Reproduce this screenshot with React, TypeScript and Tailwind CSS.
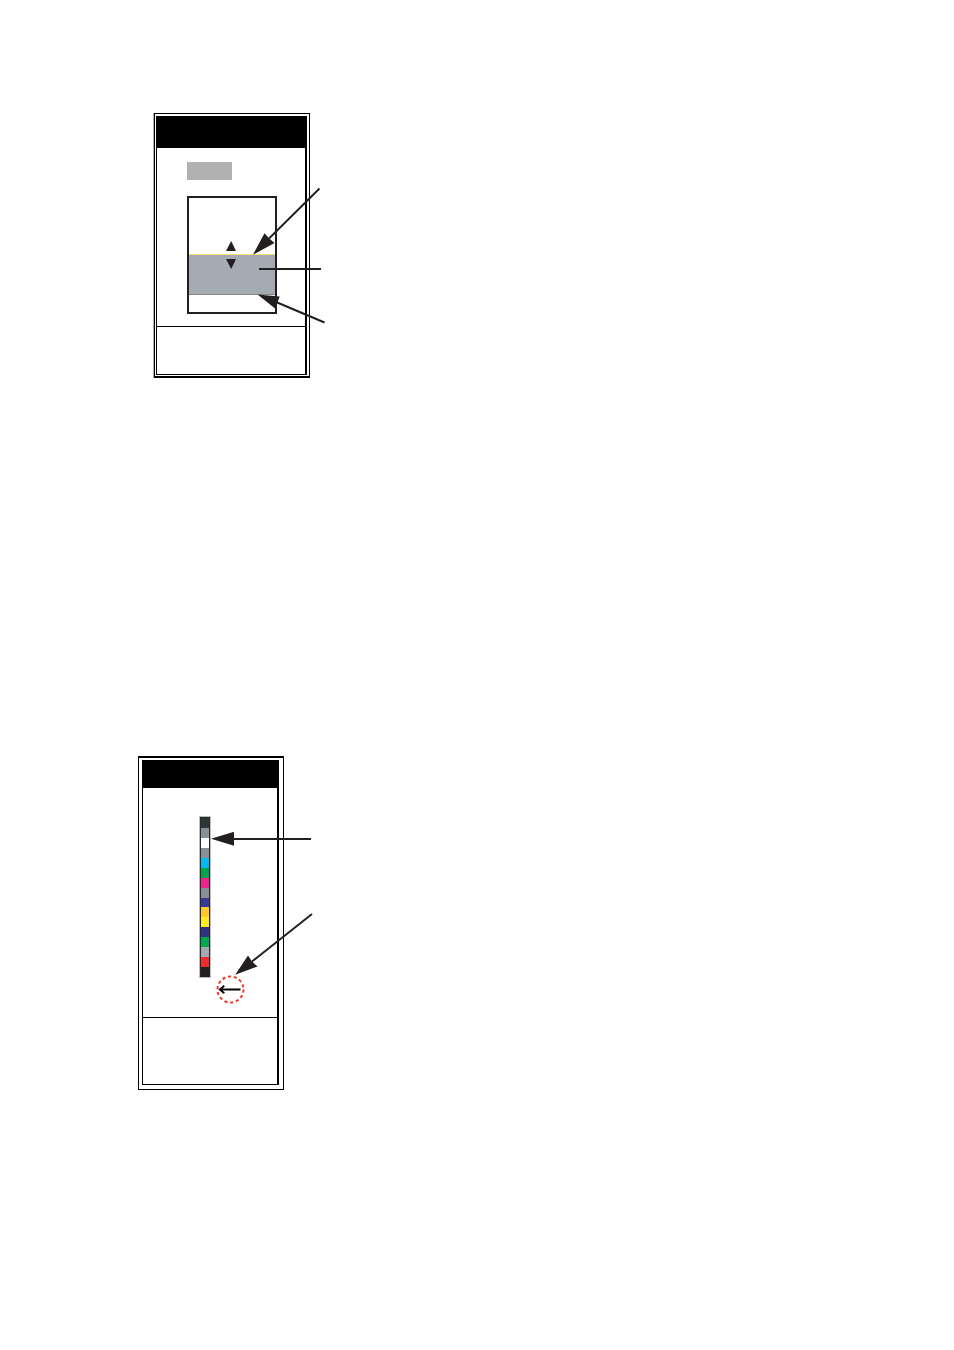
const stripColors = [
  'bg-[#2e3536]', 'bg-[#8a9094]', 'bg-white', 'bg-[#8a9094]',
  'bg-[#00b9f2]', 'bg-[#00a14b]', 'bg-[#ec268f]', 'bg-[#8a9094]',
  'bg-[#323c96]', 'bg-[#fdc82f]', 'bg-[#ffe92b]', 'bg-[#2e3480]',
  'bg-[#00a651]', 'bg-[#a3a9af]', 'bg-[#ee2c2e]', 'bg-[#231f20]',
];

function MediaPanel() {
  return (
    <figure className="relative ml-[153px] w-[157px] border-l border-[#b1b1b1]">
      <div className="border border-b-2 border-black pt-[2px] pr-[2px] pb-px pl-px">
        <div className="border border-r-2 border-black">
          <div className="-mr-px h-[31px] bg-black" />
          <div className="pt-[14px] pr-[28px] pb-[12px] pl-[30px]">
            <div className="h-[18px] w-[45px] bg-[#b1b1b1]" />
            <div className="mt-4 border-2 border-[#231f20] pb-[17px]">
              <div className="h-[56px]" />
              <div className="h-[41px] border-y border-t-[#ffdc78] border-b-[#8b888b] bg-[#a4abb3]" />
            </div>
          </div>
          <div className="h-[48px] border-t border-black" />
        </div>
      </div>
      <svg
        className="absolute top-0 -left-px overflow-visible"
        width="172"
        height="265"
        viewBox="153 113 172 265"
        fill="#231f20"
        stroke="none"
        aria-hidden="true"
      >
        <path d="M231.2 241L236 251H226Z" />
        <path d="M231.2 269L236 259H226Z" />
        <path d="M319.5 188.5L269 238.5" stroke="#231f20" strokeWidth="1.9" />
        <path d="M253 254.7L264.5 233.3L269 238.3L274.5 243Z" />
        <path d="M259 269H321" stroke="#231f20" strokeWidth="2" />
        <path d="M324.5 322.5L276 302" stroke="#231f20" strokeWidth="1.9" />
        <path d="M257.5 294.5L279.7 296.5L277.5 302.5L276 309.3Z" />
      </svg>
    </figure>
  );
}

function ColorStripPanel() {
  return (
    <figure className="relative ml-[138px] w-[146px]">
      <div className="border border-t-2 border-black pt-[2px] pr-[4px] pb-[4px] pl-[3px]">
        <div className="border border-r-2 border-black">
          <div className="h-[27px] bg-black" />
          <div className="h-[229px] pt-[28px] pl-[56px]">
            <div className="flex h-[162px] w-[12px] border border-[#bdbdbd]">
              <div className="flex grow flex-col border border-b-0 border-[#2b282a]">
                {stripColors.map((color, i) => (
                  <div key={i} className={`flex-1 ${color}`} />
                ))}
              </div>
            </div>
          </div>
          <div className="h-[67px] border-t border-black" />
        </div>
      </div>
      <svg
        className="absolute top-0 left-0 overflow-visible"
        width="174"
        height="334"
        viewBox="138 756 174 334"
        fill="#231f20"
        aria-hidden="true"
      >
        <path d="M233 839H311" stroke="#231f20" strokeWidth="2" />
        <path d="M211 838.7L234 831.7V845.8Z" />
        <path d="M312 914L252 961.5" stroke="#231f20" strokeWidth="1.9" />
        <path d="M235.2 974.8L248 955.6L252 961.5L257.5 966.5Z" />
        <circle cx="230.5" cy="989.5" r="13" fill="none" stroke="#ee3a2c" strokeWidth="2" strokeDasharray="3.2 2.633" />
        <path d="M240.5 989.5H220M224.3 985.8L219.8 989.5L224.3 993.2" fill="none" stroke="#000" strokeWidth="1.8" />
      </svg>
    </figure>
  );
}

export default function App() {
  return (
    <main className="flex min-h-screen flex-col items-start gap-[378px] bg-white pt-[113px] pb-[260px]">
      <MediaPanel />
      <ColorStripPanel />
    </main>
  );
}
